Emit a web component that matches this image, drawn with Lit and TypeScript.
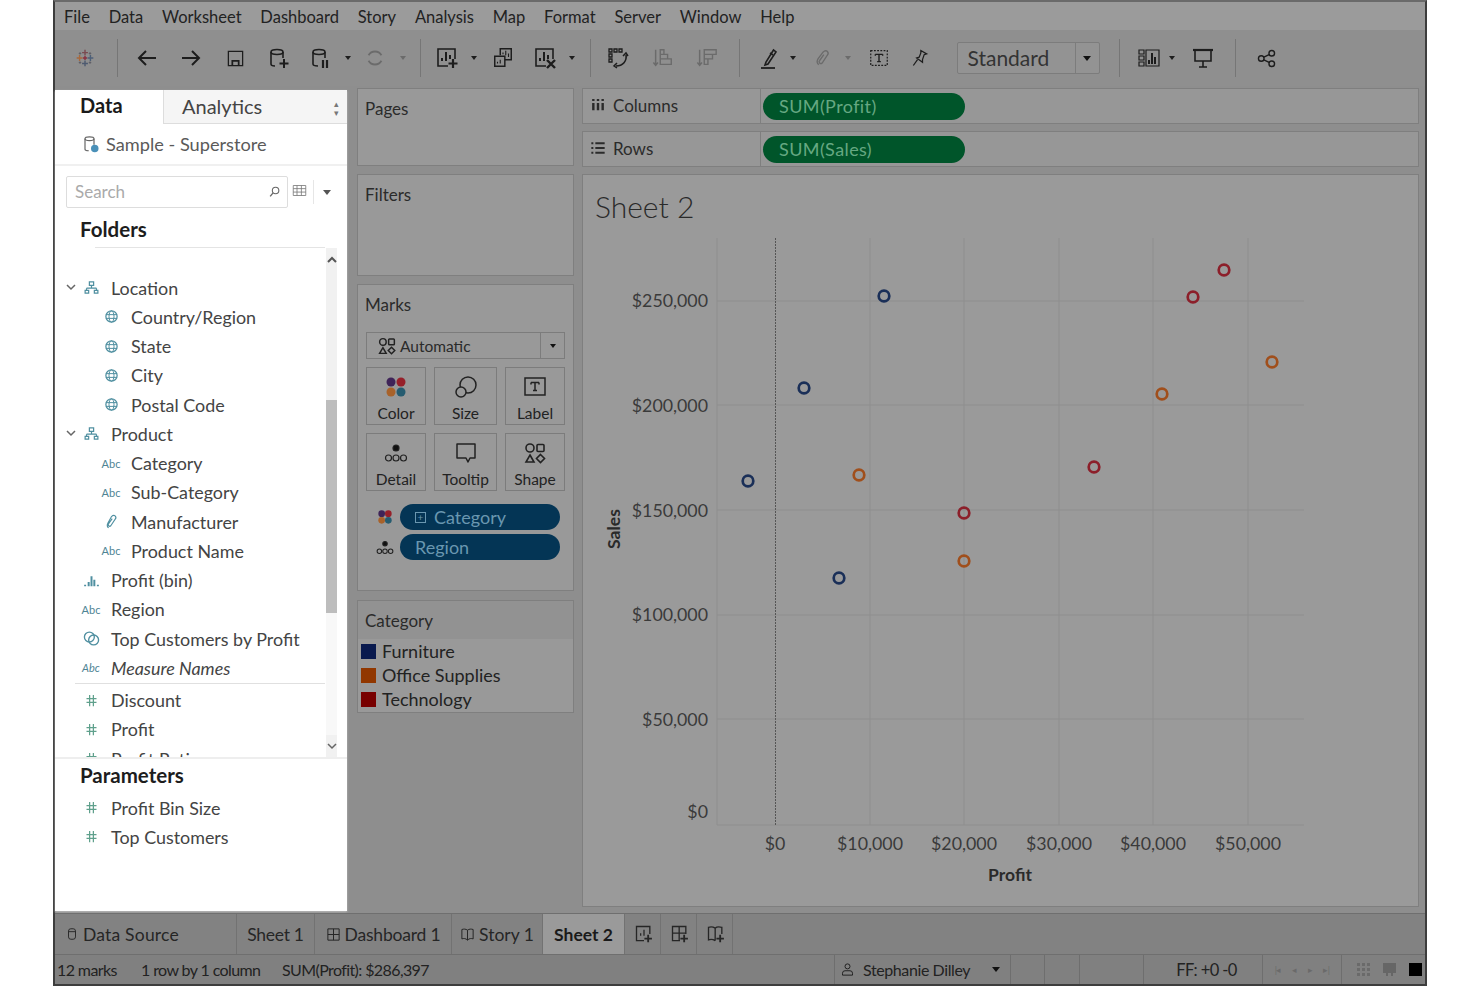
import { LitElement, html, svg, css } from "lit";
import { customElement } from "lit/decorators.js";

const ic = (body: unknown, size = 24, cls = "") =>
  html`<svg class="ic ${cls}" width=${size} height=${size} viewBox="0 0 24 24" fill="none" stroke="currentColor" stroke-width="1.6">${body}</svg>`;

// toolbar icons
const I = {
  logo: html`<svg width="20" height="20" viewBox="0 0 24 24" fill="none" stroke-width="1.7"><path d="M12 2v7M8.500 5.500h7" stroke="#7a4a50"/><path d="M12 15v7M8.500 18.500h7" stroke="#4d5a70"/><path d="M2 12h7M5.500 8.500v7" stroke="#a8683c"/><path d="M15 12h7M18.500 8.500v7" stroke="#4d5f78"/><path d="M12 9.500v5M9.500 12h5" stroke="#8a3040"/><path d="M6 5v3M4.500 6.500h3M18 5v3M16.500 6.500h3M6 16v3M4.500 17.500h3M18 16v3M16.500 17.500h3" stroke="#5f5f66" stroke-width="1.200"/></svg>`,
  back: svg`<path d="M21 12H4M11 5l-7 7 7 7" stroke-width="2"/>`,
  fwd: svg`<path d="M3 12h17M13 5l7 7-7 7" stroke-width="2"/>`,
  save: svg`<path d="M3 3h18v18H3z"/><path d="M8 21v-6h8v6" stroke-width="2.200"/>`,
  dbAdd: svg`<ellipse cx="10" cy="6" rx="6" ry="2.500"/><path d="M4 6v12q0 2 4 2M16 6v6"/><path d="M17 13v9M12.500 17.500h9" stroke-width="2"/>`,
  dbPause: svg`<ellipse cx="10" cy="6" rx="6" ry="2.500"/><path d="M4 6v12q0 2 5 2M16 6v6"/><path d="M14 14v8M18 14v8" stroke-width="2.200"/>`,
  refresh: svg`<path d="M5 9a8 8 0 0 1 14 0M19 15a8 8 0 0 1-14 0" stroke-width="2"/>`,
  newSheet: svg`<path d="M13 20H3V3h17v10"/><path d="M7 15v-3M11 15V6M15 13V9" stroke-width="2"/><path d="M18 13v9M13.500 17.500h9" stroke-width="2.200"/>`,
  dup: svg`<path d="M9 9V2h12v12h-7"/><path d="M3 10h11v11H3z"/><path d="M12 8V6M15 9V4M18 11V7M6 18v-2M9 18v-4" stroke-width="1.200"/>`,
  clear: svg`<path d="M13 20H3V3h17v10"/><path d="M7 15v-3M11 15V6M15 13V9" stroke-width="2"/><path d="M14 14l8 8M22 14l-8 8" stroke-width="2.400"/>`,
  swap: svg`<path d="M3 3h3v3H3zM8 3h3v3H8zM13 3h3v3h-3zM3 8h3v3H3zM3 13h3v3H3z" stroke-width="1.300"/><path d="M20 9c1 6-3 11-10 11" stroke-width="1.600"/><path d="M17 10l3-3 2 3M11 17l-3 3 3 2" stroke-width="1.500"/>`,
  sortA: svg`<path d="M4 3v17M1.500 17L4 20l2.500-3"/><path d="M9 3h4v5H9zM9 8h8v5H9zM9 13h12v6H9z" stroke-width="1.500"/>`,
  sortD: svg`<path d="M4 3v17M1.500 17L4 20l2.500-3"/><path d="M9 3h13v5H9zM9 8h9v5H9zM9 13h4v6H9z" stroke-width="1.500"/>`,
  pen: svg`<path d="M9 16l-1 3 3-1 8-12-2.500-2z"/><path d="M13 7l3 2"/><path d="M4 22h14" stroke-width="1.800"/>`,
  clip: svg`<path d="M7 20c-3-2-2-5-1-7l6-8c2-2 4-2 5-1s2 3 0 5l-6 9c-1 1-2 1-3 0s-1-2 0-3l5-7"/>`,
  textBox: svg`<path d="M3 4h18v16H3z" stroke-dasharray="2 1.500" stroke-width="1.300"/><path d="M8 8h8M12 8v8M10 16h4M8 8v1.500M16 8v1.500" stroke-width="1.500"/>`,
  pin: svg`<path d="M13 3l7 4-3 1-2 6 0 3-7-5 3-1 2-5zM9 14l-5 7" stroke-width="1.500"/>`,
  showMe: svg`<path d="M2 4h5v4H2zM2 10h5v4H2zM2 16h5v4H2z" stroke-width="1.200"/><path d="M9 4h13v16H9z" stroke-width="1.200"/><path d="M12 18v-4M15 18V7M18 18v-7" stroke-width="2"/>`,
  present: svg`<path d="M2 4h20" stroke-width="2.200"/><path d="M4 5v10h16V5M12 15v6M8 21h8"/>`,
  share: svg`<circle cx="6" cy="12" r="3.200"/><circle cx="18" cy="6" r="3.200"/><circle cx="18" cy="18" r="3.200"/><path d="M9 10.500l6-3M9 13.500l6 3"/>`,
};

const drop = html`<span class="tri"></span>`;
const chevron = html`<svg width="10" height="7" viewBox="0 0 10 7" fill="none" stroke="#666" stroke-width="1.500"><path d="M1 1l4 4 4-4"/></svg>`;

// data pane icons
const hier = ic(svg`<path d="M9 4h6v5H9zM12 9v4M5 13h14M5 13v3M19 13v3M3 16h5v4H3zM16 16h5v4h-5z" stroke-width="1.700"/>`, 17, "teal");
const globe = ic(svg`<circle cx="12" cy="12" r="9" stroke-width="2"/><ellipse cx="12" cy="12" rx="4" ry="9"/><path d="M3 9h18M3 15h18"/>`, 15, "teal");
const hash = ic(svg`<path d="M9 3v18M15 3v18M4 9h16M4 15h16" stroke-width="2"/>`, 15, "green");
const clipS = ic(svg`<path d="M8 21c-3-2-2-5-1-7l5-9c2-2 4-2 5-1s2 3 0 5l-6 9c-1 1-2 1-3 0s-1-2 0-3l5-7"/>`, 17, "teal");
const bins = ic(svg`<path d="M3 20v-2M8 20v-6M12 20V6M16 20v-9M21 20v-2" stroke-width="2.800"/>`, 17, "teal");
const setI = ic(svg`<circle cx="9" cy="10" r="7" stroke-width="1.900"/><circle cx="15" cy="14" r="7" stroke-width="1.900"/>`, 17, "teal");
const abc = html`<span class="abc">Abc</span>`;

type Field = { t: string; i: unknown; kid?: boolean; open?: boolean; it?: boolean };
const fields: Field[] = [
  { t: "Location", i: hier, open: true },
  { t: "Country/Region", i: globe, kid: true },
  { t: "State", i: globe, kid: true },
  { t: "City", i: globe, kid: true },
  { t: "Postal Code", i: globe, kid: true },
  { t: "Product", i: hier, open: true },
  { t: "Category", i: abc, kid: true },
  { t: "Sub-Category", i: abc, kid: true },
  { t: "Manufacturer", i: clipS, kid: true },
  { t: "Product Name", i: abc, kid: true },
  { t: "Profit (bin)", i: bins },
  { t: "Region", i: abc },
  { t: "Top Customers by Profit", i: setI },
  { t: "Measure Names", i: abc, it: true },
];
const measures: Field[] = [
  { t: "Discount", i: hash },
  { t: "Profit", i: hash },
  { t: "Profit Ratio", i: hash },
];

const dots = html`<svg width="24" height="24" viewBox="0 0 24 24"><circle cx="7" cy="7" r="4.500" fill="#3f2458"/><circle cx="17" cy="7" r="4.500" fill="#96202a"/><circle cx="7" cy="17" r="4.500" fill="#a8622a"/><circle cx="17" cy="17" r="4.500" fill="#265c70"/></svg>`;
const detail = html`<svg width="24" height="20" viewBox="0 0 24 20" fill="none" stroke="#222" stroke-width="1.200"><circle cx="12" cy="5" r="3" fill="#111"/><circle cx="4.500" cy="15" r="3"/><circle cx="12" cy="15" r="3"/><circle cx="19.500" cy="15" r="3"/></svg>`;
const shapes = html`<svg width="22" height="22" viewBox="0 0 22 22" fill="none" stroke="#222" stroke-width="1.600"><circle cx="6" cy="6" r="4"/><rect x="13" y="2.500" width="7" height="7" rx="1"/><path d="M6 13l4 7H2z"/><path d="M16.500 12.500l4 4-4 4-4-4z"/></svg>`;

const marks = [
  { t: "Color", i: dots },
  { t: "Size", i: html`<svg width="24" height="24" viewBox="0 0 24 24" fill="none" stroke="#222" stroke-width="1.500"><circle cx="14" cy="10" r="8"/><circle cx="7" cy="17" r="5" fill="#999"/></svg>` },
  { t: "Label", i: html`<svg width="24" height="24" viewBox="0 0 24 24" fill="none" stroke="#222" stroke-width="1.500"><rect x="2" y="3" width="20" height="17"/><path d="M8 7.500h8M12 7.500v8M10 15.500h4M8 7.500v2M16 7.500v2"/></svg>` },
  { t: "Detail", i: detail },
  { t: "Tooltip", i: html`<svg width="24" height="24" viewBox="0 0 24 24" fill="none" stroke="#222" stroke-width="1.500"><path d="M3 3h18v14h-5l-2 4-2-4H3z" stroke-linejoin="round"/></svg>` },
  { t: "Shape", i: shapes },
];

const gridX = [717, 870, 964, 1059, 1153, 1248];
const gridY = [301, 405, 510, 615, 719, 825];
const yLabels: [string, number][] = [["$250,000", 301], ["$200,000", 406], ["$150,000", 511], ["$100,000", 615], ["$50,000", 720], ["$0", 812]];
const xLabels: [string, number][] = [["$0", 775], ["$10,000", 870], ["$20,000", 964], ["$30,000", 1059], ["$40,000", 1153], ["$50,000", 1248]];
const BLUE = "#1a2f58";
const ORANGE = "#a04f1c";
const RED = "#8c1f2a";
const points: [number, number, string][] = [
  [884, 296, BLUE], [804, 388, BLUE], [748, 481, BLUE], [839, 578, BLUE],
  [859, 475, ORANGE], [964, 561, ORANGE], [1162, 394, ORANGE], [1272, 362, ORANGE],
  [1224, 270, RED], [1193, 297, RED], [1094, 467, RED], [964, 513, RED],
];

// toolbar entries by x centre, spaced out in flow from those centres
type Tool = { cx: number; w: number; tpl: unknown; cls?: string };
const tools: Tool[] = [
  { cx: 85, w: 24, tpl: I.logo },
  { cx: 117, w: 1, tpl: "", cls: "sep" },
  { cx: 147, w: 24, tpl: ic(I.back) },
  { cx: 191, w: 24, tpl: ic(I.fwd) },
  { cx: 235, w: 24, tpl: ic(I.save, 19) },
  { cx: 279, w: 24, tpl: ic(I.dbAdd) },
  { cx: 321, w: 24, tpl: ic(I.dbPause) },
  { cx: 348, w: 8, tpl: drop },
  { cx: 375, w: 24, tpl: ic(I.refresh, 22), cls: "off" },
  { cx: 403, w: 8, tpl: drop, cls: "off" },
  { cx: 420, w: 1, tpl: "", cls: "sep" },
  { cx: 447, w: 24, tpl: ic(I.newSheet) },
  { cx: 474, w: 8, tpl: drop },
  { cx: 503, w: 24, tpl: ic(I.dup, 22) },
  { cx: 545, w: 24, tpl: ic(I.clear) },
  { cx: 572, w: 8, tpl: drop },
  { cx: 590, w: 1, tpl: "", cls: "sep" },
  { cx: 618, w: 24, tpl: ic(I.swap) },
  { cx: 663, w: 24, tpl: ic(I.sortA, 22), cls: "off" },
  { cx: 707, w: 24, tpl: ic(I.sortD, 22), cls: "off" },
  { cx: 739, w: 1, tpl: "", cls: "sep" },
  { cx: 769, w: 24, tpl: ic(I.pen) },
  { cx: 793, w: 8, tpl: drop },
  { cx: 823, w: 24, tpl: ic(I.clip, 20), cls: "off" },
  { cx: 848, w: 8, tpl: drop, cls: "off" },
  { cx: 879, w: 24, tpl: ic(I.textBox, 22) },
  { cx: 920, w: 24, tpl: ic(I.pin, 20) },
  { cx: 1028, w: 143, tpl: html`<span class="std"><span class="std-t">Standard</span><span class="std-a"><span class="tri dark"></span></span></span>` },
  { cx: 1119, w: 1, tpl: "", cls: "sep" },
  { cx: 1149, w: 24, tpl: ic(I.showMe) },
  { cx: 1172, w: 8, tpl: drop },
  { cx: 1203, w: 24, tpl: ic(I.present) },
  { cx: 1235, w: 1, tpl: "", cls: "sep" },
  { cx: 1266, w: 24, tpl: ic(I.share, 21) },
];

@customElement("app-root")
export class AppRoot extends LitElement {
  static styles = css`
    :host { display: block; height: 987px; background: #fff; font-family: Lato, "Open Sans", sans-serif; color: #2a2a2a; overflow: hidden; }
    * { box-sizing: border-box; }
    .frame { margin-left: 53px; width: 1374px; height: 986px; border: 2px solid #3d3d3d; border-top-color: #6a6a6a; background: #8e8e8e; display: flex; flex-direction: column; }
    .ic { display: block; flex: none; }
    .teal { color: #4f8fa0; }
    .green { color: #5fa08c; }

    .menu { height: 28px; flex: none; background: #9b9b9b; display: flex; align-items: center; gap: 18.800px; padding: 2px 0 0 9px; font-size: 16.500px; color: #222; }

    .toolbar { height: 56px; flex: none; display: flex; align-items: center; background: #8f8f8f; color: #1d1d1d; }
    .tool { flex: none; display: flex; justify-content: center; align-items: center; }
    .tool.off { color: #6b6b6b; }
    .tool.sep { height: 38px; background: #767676; }
    .tri { display: block; width: 0; height: 0; border: 3.500px solid transparent; border-top: 4px solid currentColor; border-bottom: 0; }
    .tri.dark { color: #111; border-width: 4px; border-top-width: 5px; border-bottom: 0; }
    .std { width: 143px; height: 32px; display: flex; border: 1px solid #7c7c7c; background: #939393; border-radius: 2px; }
    .std-t { flex: 1; font-size: 21px; line-height: 30px; padding-left: 10px; color: #333; }
    .std-a { width: 24px; border-left: 1px solid #7c7c7c; display: flex; align-items: center; justify-content: center; }

    .main { flex: 1; display: grid; grid-template-columns: 302px 225px 837px; padding-top: 2px; min-height: 0; background: #8e8e8e; }
    .side { width: 292px; margin-top: 2px; height: 821px; background: #fff; display: flex; flex-direction: column; box-shadow: 0 1px 2px #bbb; }
    .tabs { height: 34px; display: flex; flex: none; }
    .tab-data { width: 108px; padding-left: 25px; font-size: 20px; font-weight: 700; line-height: 30px; color: #1a1a1a; }
    .tab-an { flex: 1; background: #f5f5f5; border-left: 1px solid #ddd; border-bottom: 1px solid #ddd; padding-left: 18px; font-size: 20px; line-height: 32px; color: #444; display: flex; justify-content: space-between; }
    .updown { font-size: 9px; line-height: 9px; color: #777; padding: 9px 8px 0 0; }
    .src { height: 42px; flex: none; display: flex; align-items: center; gap: 6px; padding-left: 27px; border-bottom: 2px solid #f0f0f0; font-size: 18.200px; color: #5a5a5a; }
    .src-ic { color: #666; }
    .search-row { height: 48px; flex: none; display: flex; align-items: flex-start; padding: 10px 0 0 11px; }
    .search { width: 222px; height: 32px; border: 1px solid #ddd; border-radius: 2px; display: flex; align-items: center; justify-content: space-between; padding: 0 6px 2px 8px; font-size: 17px; color: #aaa; }
    .search-ic { color: #666; }
    .list-ic { margin: 7px 0 0 4px; color: #777; }
    .v-sep { width: 1px; height: 24px; background: #e6e6e6; margin: 4px 0 0 6px; }
    .side .tri { color: #555; margin: 14px 0 0 9px; border-width: 4.500px; border-top-width: 5px; border-bottom: 0; }
    h3 { margin: 0; font-size: 20.500px; font-weight: 700; color: #1d1d1d; padding-left: 25px; flex: none; }
    .h-folders { height: 33px; line-height: 30px; }
    .rule { height: 1px; background: #e4e4e4; margin: 0 22px 0 40px; flex: none; }
    .fields { height: 511px; flex: none; display: flex; border-bottom: 2px solid #eee; }
    .rows { flex: 1; min-width: 0; padding-top: 25px; overflow: hidden; height: 509px; }
    .row { height: 29.250px; display: flex; align-items: center; font-size: 17.900px; color: #444; padding-left: 56px; }
    .row.kid { padding-left: 76px; }
    .row.open { padding-left: 11px; }
    .row .slot { width: 24px; margin-left: -32px; margin-right: 8px; display: flex; justify-content: center; flex: none; }
    .row .chev { width: 10px; margin-right: 3px; flex: none; display: flex; }
    .row .chev + .slot { margin-left: 0; }
    .row.it { font-style: italic; }
    .abc { font-size: 11px; color: #4f8494; }
    .row-rule { height: 1px; background: #e0e0e0; margin: 0 0 2px 20px; }
    .scroll { width: 11px; margin: 0 10px 0 1px; background: #f1f1f1; display: flex; flex-direction: column; align-items: center; height: 509px; }
    .arrow { height: 22px; flex: none; display: flex; align-items: center; justify-content: center; }
    .thumb { width: 11px; height: 213px; margin-top: 130px; background: #bdbdbd; flex: none; }
    .track-end { flex: 1; background: #f8f8f8; width: 11px; }
    .h-params { height: 32px; line-height: 32px; }
    .params { padding-top: 2px; }

    .mid { width: 217px; display: flex; flex-direction: column; }
    .panel { border: 1px solid #7f7f7f; background: #999; flex: none; }
    .panel > .ttl { font-size: 17px; padding: 9px 7px 0; color: #2b2b2b; }
    .pages { height: 78px; }
    .filters { height: 102px; margin-top: 8px; }
    .marks { height: 307px; margin-top: 8px; padding: 0 8px; }
    .marks > .ttl { padding: 9px 0 0; margin-left: -1px; }
    .auto { margin-top: 17px; height: 27px; border: 1px solid #7c7c7c; display: flex; align-items: center; font-size: 15.500px; }
    .auto-l { flex: 1; display: flex; align-items: center; gap: 4px; padding-left: 11px; }
    .auto-a { width: 24px; height: 100%; border-left: 1px solid #7c7c7c; display: flex; align-items: center; justify-content: center; color: #111; }
    .cards { display: grid; grid-template-columns: 60px 63px 60px; column-gap: 8px; row-gap: 8px; margin-top: 8px; }
    .card { height: 58px; border: 1px solid #7c7c7c; display: flex; flex-direction: column; align-items: center; justify-content: flex-end; font-size: 15.500px; padding-bottom: 2px; color: #222; }
    .card-i { height: 30px; display: flex; align-items: center; justify-content: center; margin-bottom: 2px; }
    .pills { margin-top: 13px; display: flex; flex-direction: column; gap: 4px; }
    .pill-row { display: flex; align-items: center; }
    .pill-i { width: 34px; flex: none; display: flex; justify-content: center; padding-left: 4px; }
    .pill { width: 160px; height: 26px; border-radius: 13px; background: #043555; color: #6a97b0; font-size: 18px; display: flex; align-items: center; padding-left: 15px; gap: 8px; }
    .plus-box { width: 11px; height: 11px; border: 1px solid #6a97b0; font-size: 10px; line-height: 8px; text-align: center; }
    .legend { height: 113px; margin-top: 9px; }
    .legend-h { height: 38px; background: #929292; padding: 9px 7px 0; font-size: 17px; }
    .legend-row { height: 24px; display: flex; align-items: center; gap: 6px; padding-left: 3px; font-size: 18px; color: #222; }
    .legend-row i { width: 15px; height: 15px; display: block; flex: none; }
    .sw-f { background: #08194e; }
    .sw-o { background: #913700; }
    .sw-t { background: #780000; }

    .right { display: flex; flex-direction: column; gap: 7px; }
    .shelf { height: 36px; flex: none; border: 1px solid #7f7f7f; background: #979797; display: flex; }
    .shelf-l { width: 178px; border-right: 1px solid #7f7f7f; display: flex; align-items: center; gap: 7px; padding: 0 0 2px 7px; font-size: 17px; color: #2b2b2b; }
    .shelf-pill { margin: 4px 0 0 2px; width: 202px; height: 27px; border-radius: 14px; background: #00552a; color: #66a882; font-size: 18px; letter-spacing: 0.400px; padding-left: 16px; line-height: 26px; }
    .chart { height: 733px; flex: none; border: 1px solid #7f7f7f; background: #9a9a9a; }
    .chart-title { height: 63px; font-size: 30px; font-weight: 300; padding: 13px 0 0 12px; color: #2a2a2a; line-height: 36px; }
    .chart svg { display: block; }
    .grid-line { stroke: #8e8e8e; stroke-width: 1; }
    .tick { font-size: 17.800px; fill: #3a3a3a; font-family: Lato, sans-serif; }
    .axis { font-size: 17.500px; font-weight: 700; fill: #2a2a2a; font-family: Lato, sans-serif; }

    .sheets { height: 41px; flex: none; border-top: 1px solid #6f6f6f; background: #828282; display: flex; font-size: 17.500px; color: #262626; }
    .sheet { display: flex; align-items: center; gap: 4px; border-right: 1px solid #727272; justify-content: center; }
    .s-src { width: 182px; justify-content: flex-start; padding-left: 10px; letter-spacing: 0.200px; }
    .s-1 { width: 78px; letter-spacing: -0.300px; }
    .s-2 { width: 137px; letter-spacing: -0.200px; }
    .s-3 { width: 91px; }
    .s-on { width: 82px; background: #9a9a9a; font-weight: 700; color: #1a1a1a; }
    .s-add { width: 36px; padding-left: 2px; }
    .status { height: 30px; flex: none; border-top: 1px solid #6f6f6f; background: #808080; display: flex; align-items: center; font-size: 16px; letter-spacing: -0.600px; color: #222; padding-left: 2px; }
    .st-a { width: 84px; }
    .st-b { width: 141px; }
    .st-c { width: 552px; }
    .cell { height: 100%; border-left: 1px solid #6e6e6e; display: flex; align-items: center; flex: none; }
    .c-user { width: 176px; padding-left: 5px; gap: 8px; letter-spacing: -0.400px; }
    .c-user .tri { margin-left: 14px; color: #111; border-width: 4px; border-top-width: 5px; border-bottom: 0; }
    .c-s1 { width: 34px; }
    .c-s2 { width: 35px; }
    .c-s3 { width: 64px; }
    .c-ff { width: 119px; justify-content: center; padding-left: 7px; font-size: 16.500px; }
    .c-nav { width: 79px; justify-content: space-around; padding: 0 6px; color: #6a6a6a; font-size: 9px; }
    .c-view { flex: 1; justify-content: space-between; padding: 0 3px 0 15px; }
    .v1 { width: 13px; height: 13px; background: repeating-linear-gradient(90deg, transparent 0 3px, #808080 3px 5px), repeating-linear-gradient(0deg, transparent 0 3px, #808080 3px 5px), #6a6a6a; }
    .v2 { width: 13px; height: 13px; background: #666; border-bottom: 3px dotted #808080; }
    .v3 { width: 13px; height: 13px; background: #000; }
  `;

  private field(f: Field) {
    return html`<div class="row ${f.kid ? "kid" : ""} ${f.it ? "it" : ""} ${f.open ? "open" : ""}">
      ${f.open ? html`<span class="chev">${chevron}</span>` : ""}<span class="slot">${f.i}</span>${f.t}
    </div>`;
  }

  private toolbar() {
    let right = 55;
    return tools.map((t) => {
      const left = t.cx - t.w / 2;
      const gap = left - right;
      right = left + t.w;
      return html`<span class="tool ${t.cls ?? ""}" style="width:${t.w}px;margin-left:${gap}px">${t.tpl}</span>`;
    });
  }

  private chart() {
    return html`<svg width="835" height="668" viewBox="583 238 835 668">
      ${gridX.map((x) => svg`<line class="grid-line" x1=${x} x2=${x} y1="238" y2="825"></line>`)}
      ${gridY.map((y) => svg`<line class="grid-line" x1="717" x2="1304" y1=${y} y2=${y}></line>`)}
      <line x1="775.500" x2="775.500" y1="238" y2="825" stroke="#555" stroke-dasharray="2 1"></line>
      ${yLabels.map(([t, y]) => svg`<text class="tick" x="708" y=${y + 6} text-anchor="end">${t}</text>`)}
      ${xLabels.map(([t, x]) => svg`<text class="tick" x=${x} y="850" text-anchor="middle">${t}</text>`)}
      <text class="axis" text-anchor="middle" transform="translate(620 529) rotate(-90)">Sales</text>
      <text class="axis" x="1010" y="881" text-anchor="middle">Profit</text>
      ${points.map(([x, y, c]) => svg`<circle cx=${x} cy=${y} r="5.300" fill="none" stroke=${c} stroke-width="2.700"></circle>`)}
    </svg>`;
  }

  render() {
    return html`<div class="frame">
      <div class="menu">
        ${["File", "Data", "Worksheet", "Dashboard", "Story", "Analysis", "Map", "Format", "Server", "Window", "Help"].map((m) => html`<span>${m}</span>`)}
      </div>
      <div class="toolbar">${this.toolbar()}</div>
      <div class="main">
        <aside class="side">
          <div class="tabs">
            <div class="tab-data">Data</div>
            <div class="tab-an">Analytics<span class="updown">▴<br />▾</span></div>
          </div>
          <div class="src">
            <span class="src-ic">${ic(svg`<ellipse cx="10" cy="5" rx="6" ry="2.500"/><path d="M4 5v14q0 2 5 2M16 5v8"/><circle cx="17" cy="18" r="5" fill="#4a90b8" stroke="none"/>`, 18)}</span>
            Sample - Superstore
          </div>
          <div class="search-row">
            <div class="search">Search
              <span class="search-ic">${ic(svg`<circle cx="14" cy="10" r="6" stroke-width="2"/><path d="M9 15l-5 6" stroke-width="2.500"/>`, 13)}</span>
            </div>
            <span class="list-ic">${ic(svg`<path d="M2 4h20v16H2zM2 9h20M2 14.500h20M8 4v16M15 4v16" stroke-width="1.300"/>`, 15)}</span>
            <span class="v-sep"></span>
            <span class="tri"></span>
          </div>
          <h3 class="h-folders">Folders</h3>
          <div class="rule"></div>
          <div class="fields">
            <div class="rows">
              ${fields.map((f) => this.field(f))}
              <div class="row-rule"></div>
              ${measures.map((f) => this.field(f))}
            </div>
            <div class="scroll">
              <span class="arrow"><svg width="10" height="7" viewBox="0 0 10 7" fill="none" stroke="#555" stroke-width="2"><path d="M1 6l4-4 4 4"/></svg></span>
              <span class="thumb"></span>
              <span class="track-end"></span>
              <span class="arrow">${chevron}</span>
            </div>
          </div>
          <h3 class="h-params">Parameters</h3>
          <div class="params">
            ${[{ t: "Profit Bin Size", i: hash }, { t: "Top Customers", i: hash }].map((f) => this.field(f))}
          </div>
        </aside>

        <section class="mid">
          <div class="panel pages"><div class="ttl">Pages</div></div>
          <div class="panel filters"><div class="ttl">Filters</div></div>
          <div class="panel marks">
            <div class="ttl">Marks</div>
            <div class="auto">
              <span class="auto-l"><svg width="18" height="18" viewBox="0 0 22 22" fill="none" stroke="#222" stroke-width="1.800"><circle cx="6" cy="6" r="4"/><rect x="13" y="2.500" width="7" height="7" rx="1"/><path d="M6 13l4 7H2z"/><path d="M16.500 12.500l4 4-4 4-4-4z"/></svg>Automatic</span>
              <span class="auto-a"><span class="tri"></span></span>
            </div>
            <div class="cards">
              ${marks.map((m) => html`<div class="card"><span class="card-i">${m.i}</span>${m.t}</div>`)}
            </div>
            <div class="pills">
              <div class="pill-row">
                <span class="pill-i"><svg width="16" height="16" viewBox="0 0 24 24"><circle cx="7" cy="7" r="5" fill="#3f2458"/><circle cx="17" cy="7" r="5" fill="#96202a"/><circle cx="7" cy="17" r="5" fill="#a8622a"/><circle cx="17" cy="17" r="5" fill="#265c70"/></svg></span>
                <span class="pill"><span class="plus-box">+</span>Category</span>
              </div>
              <div class="pill-row">
                <span class="pill-i"><svg width="18" height="15" viewBox="0 0 24 20" fill="none" stroke="#222" stroke-width="1.400"><circle cx="12" cy="5" r="3" fill="#111"/><circle cx="4.500" cy="15" r="3"/><circle cx="12" cy="15" r="3"/><circle cx="19.500" cy="15" r="3"/></svg></span>
                <span class="pill">Region</span>
              </div>
            </div>
          </div>
          <div class="panel legend">
            <div class="legend-h">Category</div>
            <div class="legend-row"><i class="sw-f"></i>Furniture</div>
            <div class="legend-row"><i class="sw-o"></i>Office Supplies</div>
            <div class="legend-row"><i class="sw-t"></i>Technology</div>
          </div>
        </section>

        <section class="right">
          <div class="shelf">
            <div class="shelf-l">${ic(svg`<path d="M5 9v11M12 9v11M19 9v11" stroke-width="3.600"/><path d="M5 3v3M12 3v3M19 3v3" stroke-width="3.600"/>`, 16)}Columns</div>
            <div class="shelf-pill">SUM(Profit)</div>
          </div>
          <div class="shelf">
            <div class="shelf-l">${ic(svg`<path d="M8 5h14M8 12h14M8 19h14M2 5h3M2 12h3M2 19h3" stroke-width="2.900"/>`, 16)}Rows</div>
            <div class="shelf-pill">SUM(Sales)</div>
          </div>
          <div class="chart">
            <div class="chart-title">Sheet 2</div>
            ${this.chart()}
          </div>
        </section>
      </div>

      <div class="sheets">
        <div class="sheet s-src">${ic(svg`<rect x="6" y="3" width="12" height="18" rx="4"/><path d="M6 8h12"/>`, 14)}Data Source</div>
        <div class="sheet s-1">Sheet 1</div>
        <div class="sheet s-2">${ic(svg`<path d="M3 3h18v18H3zM12 3v18M3 12h18"/>`, 15)}Dashboard 1</div>
        <div class="sheet s-3">${ic(svg`<path d="M12 5v16M12 5C9 3 6 3 3 4v15c3-1 6-1 9 2 3-3 6-3 9-2V4c-3-1-6-1-9 1z"/>`, 15)}Story 1</div>
        <div class="sheet s-on">Sheet 2</div>
        <div class="sheet s-add">${ic(svg`<path d="M12 20H3V3h16v9"/><path d="M8 14v-3M12 14V7" stroke-width="1.500"/><path d="M17 13v9M12.500 17.500h9" stroke-width="2.200"/>`, 20)}</div>
        <div class="sheet s-add">${ic(svg`<path d="M12 20H3V3h16v9M11 3v17M3 11h16"/><path d="M17 13v9M12.500 17.500h9" stroke-width="2.200"/>`, 20)}</div>
        <div class="sheet s-add">${ic(svg`<path d="M11 5v15M11 5C8 3 6 3 3 4v15c3-1 5-1 8 1M11 5c2-2 4-2 8-1v8"/><path d="M17 13v9M12.500 17.500h9" stroke-width="2.200"/>`, 20)}</div>
      </div>

      <div class="status">
        <span class="st-a">12 marks</span>
        <span class="st-b">1 row by 1 column</span>
        <span class="st-c">SUM(Profit): $286,397</span>
        <div class="cell c-user">${ic(svg`<circle cx="12" cy="7" r="4"/><path d="M4 21v-3q0-4 4-4h8q4 0 4 4v3z"/>`, 15)}Stephanie Dilley<span class="tri"></span></div>
        <div class="cell c-s1"></div>
        <div class="cell c-s2"></div>
        <div class="cell c-s3"></div>
        <div class="cell c-ff">FF: +0 -0</div>
        <div class="cell c-nav"><span>|◂</span><span>◂</span><span>▸</span><span>▸|</span></div>
        <div class="cell c-view"><span class="v1"></span><span class="v2"></span><span class="v3"></span></div>
      </div>
    </div>`;
  }
}
